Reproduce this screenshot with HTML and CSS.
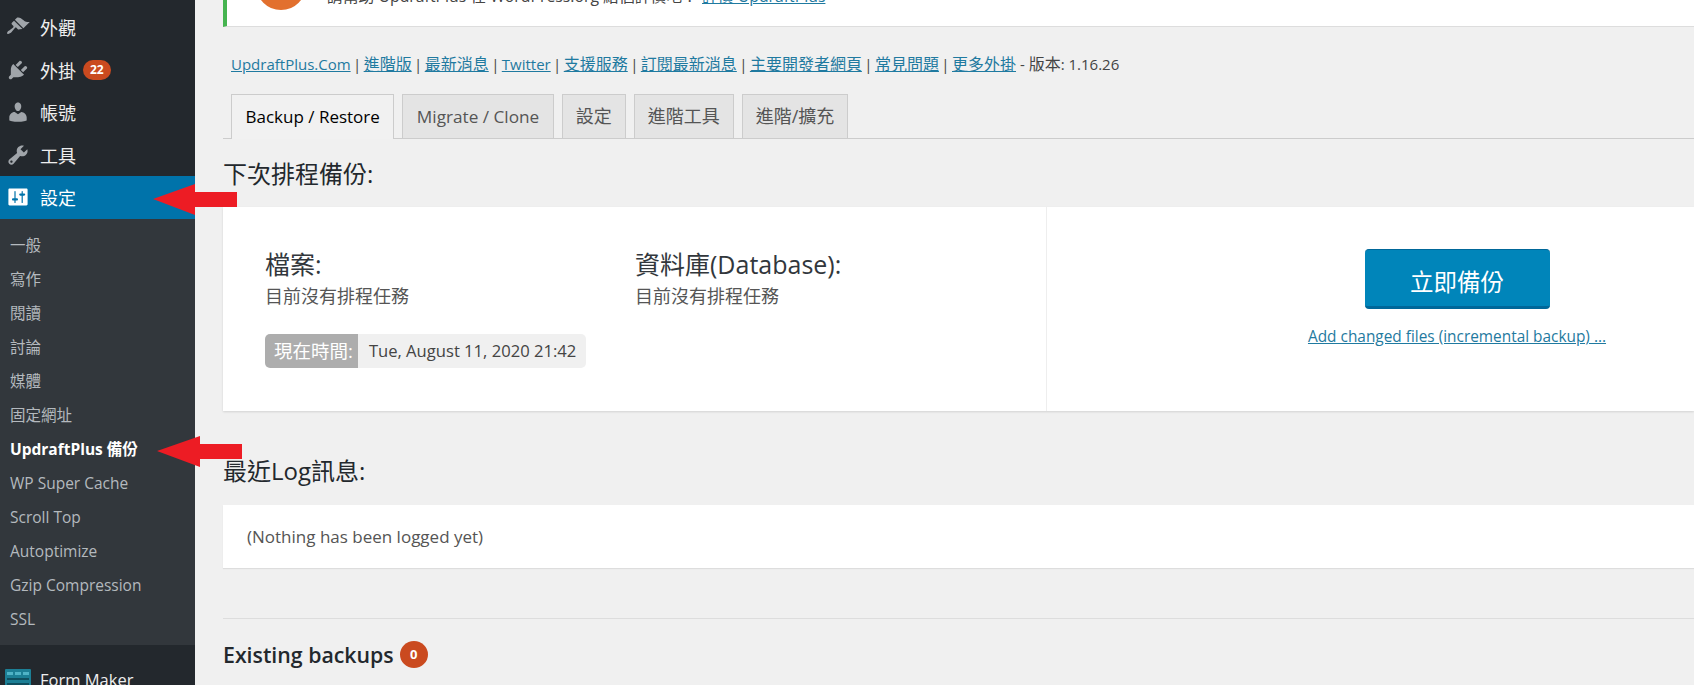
FILE: index.html
```html
<!DOCTYPE html>
<html lang="zh-Hant">
<head>
  <meta charset="UTF-8" />
  <title>UpdraftPlus 備份</title>
  <link rel="stylesheet" href="styles.css">
</head>
<body>
  <div class="page">
    <!-- Admin menu -->
    <nav class="sidebar">
      <a class="menu-item">
        <svg class="menu-icon" viewBox="0 0 20 20"><path d="M14.48 11.06L7.41 3.99l1.5-1.5c.5-.56 2.3-.47 3.51.32 1.21.8 1.43 1.28 2.91 2.1 1.18.64 2.45 1.26 4.45.85zm-.71.71L6.7 4.7 4.93 6.47c-.39.39-.39 1.02 0 1.41l1.06 1.06c.39.39.39 1.03 0 1.42-.6.6-1.43 1.11-2.21 1.69-.35.26-.7.53-1.01.84C1.43 13.23.4 14.98 1.1 15.67c.71.71 2.45-.32 3.79-1.67.31-.31.58-.66.84-1.01.58-.78 1.09-1.61 1.69-2.21.39-.39 1.02-.39 1.41 0l1.06 1.06c.39.39 1.02.39 1.41 0z"/></svg>
        <span>外觀</span>
      </a>
      <a class="menu-item">
        <svg class="menu-icon" viewBox="0 0 20 20"><path d="M13.11 4.36L9.87 7.6 8 5.73l3.24-3.24c.35-.34 1.05-.2 1.56.32.52.51.66 1.21.31 1.55zm-8 1.77l.91-1.12 9.01 9.01-1.19.84c-.71.71-2.63 1.16-3.82 1.16H6.14L4.9 17.26c-.59.59-1.54.59-2.12 0-.59-.58-.59-1.53 0-2.12l1.24-1.24v-3.88c0-1.13.4-3.19 1.09-3.89zm7.26 3.97l3.24-3.24c.34-.35 1.04-.21 1.55.31.52.51.66 1.21.31 1.55l-3.24 3.25z"/></svg>
        <span>外掛</span>
        <span class="count">22</span>
      </a>
      <a class="menu-item">
        <svg class="menu-icon" viewBox="0 0 20 20"><path d="M10 9.25c-2.27 0-2.73-3.44-2.73-3.44C7 4.02 7.82 2 9.97 2c2.16 0 2.98 2.02 2.71 3.81 0 0-.41 3.44-2.68 3.44zm0 2.57L12.72 10c2.39 0 4.52 2.33 4.52 4.53v2.49s-3.65 1.13-7.24 1.13c-3.65 0-7.24-1.13-7.24-1.13v-2.49c0-2.25 1.94-4.48 4.47-4.48z"/></svg>
        <span>帳號</span>
      </a>
      <a class="menu-item">
        <svg class="menu-icon" viewBox="0 0 20 20"><path d="M16.68 9.77c-1.34 1.34-3.3 1.67-4.95.99l-5.41 6.52c-.99.99-2.59.99-3.58 0s-.99-2.59 0-3.57l6.52-5.42c-.68-1.65-.35-3.61.99-4.95 1.28-1.28 3.12-1.62 4.72-1.06l-2.89 2.89 2.82 2.82 2.86-2.87c.53 1.58.18 3.39-1.08 4.65zM3.81 16.21c.4.39 1.04.39 1.43 0 .4-.4.4-1.04 0-1.43-.39-.4-1.03-.4-1.43 0-.39.39-.39 1.03 0 1.43z"/></svg>
        <span>工具</span>
      </a>
      <a class="menu-item current">
        <svg class="menu-icon" viewBox="0 0 20 20"><path d="M18 16V4c0-.55-.45-1-1-1H3c-.55 0-1 .45-1 1v12c0 .55.45 1 1 1h14c.55 0 1-.45 1-1zM8 11h1c.55 0 1 .45 1 1s-.45 1-1 1H8v1.5c0 .28-.22.5-.5.5s-.5-.22-.5-.5V13H6c-.55 0-1-.45-1-1s.45-1 1-1h1V5.5c0-.28.22-.5.5-.5s.5.22.5.5V11zm5-2h-1c-.55 0-1-.45-1-1s.45-1 1-1h1V5.5c0-.28.22-.5.5-.5s.5.22.5.5V7h1c.55 0 1 .45 1 1s-.45 1-1 1h-1v5.5c0 .28-.22.5-.5.5s-.5-.22-.5-.5V9z"/></svg>
        <span>設定</span>
      </a>
      <ul class="submenu">
        <li>一般</li>
        <li>寫作</li>
        <li>閱讀</li>
        <li>討論</li>
        <li>媒體</li>
        <li>固定網址</li>
        <li class="active">UpdraftPlus 備份</li>
        <li>WP Super Cache</li>
        <li>Scroll Top</li>
        <li>Autoptimize</li>
        <li>Gzip Compression</li>
        <li>SSL</li>
      </ul>
      <a class="menu-item form-maker">
        <svg class="fm-icon" viewBox="0 0 26 22"><rect width="26" height="22" rx="1" fill="#1c7f95"/><rect x="2" y="3" width="6" height="3" fill="#4fb3c6"/><rect x="10" y="3" width="6" height="3" fill="#4fb3c6"/><rect x="18" y="3" width="6" height="3" fill="#4fb3c6"/><rect x="2" y="9" width="22" height="2" fill="#0f4f5f"/><rect x="2" y="14" width="22" height="2" fill="#0f4f5f"/></svg>
        <span>Form Maker</span>
      </a>
    </nav>

    <main class="content">
      <div class="notice">
        <div class="notice-logo"></div>
        <p>請幫助 UpdraftPlus 在 WordPress.org 給個評價吧？ <a href="#">評價 UpdraftPlus</a></p>
      </div>

      <p class="links">
        <a href="#">UpdraftPlus.Com</a> | <a class="zh" href="#">進階版</a> | <a class="zh" href="#">最新消息</a> | <a href="#">Twitter</a> | <a class="zh" href="#">支援服務</a> | <a class="zh" href="#">訂閱最新消息</a> | <a class="zh" href="#">主要開發者網頁</a> | <a class="zh" href="#">常見問題</a> | <a class="zh" href="#">更多外掛</a><span class="version"> - <span class="zh">版本</span>: 1.16.26</span>
      </p>

      <div class="tabs">
        <a class="tab active">Backup / Restore</a>
        <a class="tab">Migrate / Clone</a>
        <a class="tab zh">設定</a>
        <a class="tab zh">進階工具</a>
        <a class="tab zh">進階/擴充</a>
      </div>

      <h2 class="section-title">下次排程備份:</h2>
      <div class="schedule-card">
        <div class="schedule-info">
          <div class="schedule-cols">
            <div class="schedule-col">
              <h3>檔案:</h3>
              <p>目前沒有排程任務</p>
            </div>
            <div class="schedule-col">
              <h3>資料庫(Database):</h3>
              <p>目前沒有排程任務</p>
            </div>
          </div>
          <div class="time-badge">
            <span class="time-label">現在時間:</span>
            <span class="time-value">Tue, August 11, 2020 21:42</span>
          </div>
        </div>
        <div class="schedule-action">
          <button class="backup-btn">立即備份</button>
          <a class="incremental" href="#">Add changed files (incremental backup) ...</a>
        </div>
      </div>

      <h2 class="section-title log-title">最近Log訊息:</h2>
      <div class="log-box">(Nothing has been logged yet)</div>

      <hr class="divider">

      <h2 class="existing">Existing backups <span class="existing-count">0</span></h2>
    </main>

    <!-- Annotation arrows over the screenshot -->
    <svg class="arrow arrow-settings" viewBox="0 0 84 32"><polygon points="0,15 42,0 42,8 84,8 84,23 42,23 42,31"/></svg>
    <svg class="arrow arrow-updraft" viewBox="0 0 85 32"><polygon points="0,15 43,0 43,8 85,8 85,23 43,23 43,31"/></svg>
  </div>
</body>
</html>
```

FILE: styles.css
```css
* {
  box-sizing: border-box;
}
html, body {
  margin: 0;
  height: 100%;
  overflow: hidden;
}
body {
  font-family: "Open Sans", "Noto Sans CJK TC", sans-serif;
  background: #f0f0f0;
  color: #444;
}
.page {
  position: relative;
  display: flex;
  height: 685px;
  overflow: hidden;
}
a {
  color: #1f7aa0;
}

/* sidebar */
.sidebar {
  flex: 0 0 195px;
  padding-top: 6px;
  background: #23282d;
  color: #eee;
  overflow: hidden;
}
.menu-item {
  display: flex;
  align-items: center;
  height: 42.5px;
  padding-left: 6px;
  font-size: 18px;
  color: #eee;
}
.menu-icon {
  width: 24px;
  height: 24px;
  margin-right: 10px;
  fill: #a0a5aa;
  flex: none;
}
.count {
  margin-left: 7px;
  padding: 0 7px;
  height: 20px;
  line-height: 20px;
  border-radius: 10px;
  background: #ca4a1f;
  color: #fff;
  font-size: 12px;
  font-weight: 700;
}
.menu-item.current {
  background: #0073aa;
  color: #fff;
}
.menu-item.current .menu-icon {
  fill: #fff;
}
.submenu {
  list-style: none;
  margin: 0;
  padding: 9px 0 9px;
  background: #32373c;
  color: #b4b9be;
  font-size: 15.5px;
}
.submenu li {
  height: 34px;
  line-height: 34px;
  padding-left: 10px;
  white-space: nowrap;
}
.submenu li.active {
  color: #fff;
  font-weight: 700;
}
.form-maker {
  margin-top: 14px;
  padding-left: 5px;
  font-size: 16.5px;
}
.fm-icon {
  width: 26px;
  height: 22px;
  margin-right: 9px;
  flex: none;
}

/* main column */
.content {
  flex: 1;
  min-width: 0;
  padding-left: 28px;
  overflow: hidden;
}
.notice {
  display: flex;
  align-items: flex-end;
  height: 27px;
  background: #fff;
  border-left: 4px solid #46b450;
  border-bottom: 1px solid #ddd;
  padding: 0 0 20px 29px;
  clip-path: inset(0);
}
.notice-logo {
  flex: none;
  width: 50px;
  height: 50px;
  margin-bottom: -4px;
  margin-right: 21px;
  border: 11px solid #e2702e;
  border-radius: 50%;
}
.notice p {
  margin: 0;
  font-size: 15.8px;
  line-height: 20px;
  white-space: nowrap;
}
.links {
  margin: 26px 0 0 8px;
  font-size: 15px;
  line-height: 22px;
  word-spacing: -1.5px;
  white-space: nowrap;
}
.links .zh {
  font-size: 16px;
}
.version {
  word-spacing: 0;
}
.tabs {
  display: flex;
  gap: 8px;
  height: 45px;
  margin-top: 19px;
  padding-left: 8px;
  border-bottom: 1px solid #ccc;
}
.tab {
  height: 44px;
  padding: 0 13.5px;
  line-height: 43px;
  font-size: 17.2px;
  color: #555;
  background: #e4e4e4;
  border: 1px solid #ccc;
  border-bottom: 0;
}
.tab.zh {
  padding: 0 13px;
  font-size: 18px;
}
.tab.active {
  height: 45px;
  font-size: 17px;
  color: #000;
  background: #f1f1f1;
}
.section-title {
  margin: 19px 0 0;
  height: 32px;
  line-height: 32px;
  font-size: 24px;
  font-weight: 400;
  color: #23282d;
}
.schedule-card {
  display: flex;
  height: 204px;
  margin-top: 17px;
  background: #fff;
  box-shadow: 0 1px 2px rgba(0, 0, 0, 0.12);
}
.schedule-info {
  flex: 0 0 824px;
  padding: 40px 0 0 42px;
  border-right: 1px solid #eee;
}
.schedule-cols {
  display: flex;
}
.schedule-col {
  flex: 0 0 370px;
}
.schedule-col h3 {
  margin: 0;
  height: 34px;
  line-height: 34px;
  font-size: 25px;
  font-weight: 400;
  color: #32373c;
}
.schedule-col p {
  margin: 0;
  height: 26px;
  padding-top: 2px;
  line-height: 27px;
  font-size: 18px;
  color: #555;
}
.time-badge {
  display: inline-flex;
  height: 34px;
  margin-top: 27px;
  line-height: 34px;
  border-radius: 5px;
  overflow: hidden;
}
.time-label {
  padding: 0 5px 0 9px;
  background: #adadad;
  color: #fff;
  font-size: 18.5px;
}
.time-value {
  padding: 0 10px 0 11px;
  background: #f0f0f0;
  color: #444;
  font-size: 16.6px;
}
.schedule-action {
  flex: 0 0 820px;
  display: flex;
  flex-direction: column;
  align-items: center;
  padding-top: 42px;
}
.backup-btn {
  width: 185px;
  height: 60px;
  padding-top: 6px;
  border: 0;
  border-bottom: 3px solid #006799;
  border-top: 1px solid #006799;
  border-radius: 4px;
  background: #0085ba;
  color: #fff;
  font-family: inherit;
  font-size: 23.5px;
}
.incremental {
  margin-top: 17px;
  font-size: 15.4px;
  line-height: 22px;
}
.log-title {
  margin-top: 44px;
}
.log-box {
  height: 63px;
  margin-top: 18px;
  padding: 0 24px;
  line-height: 64px;
  font-size: 17px;
  color: #555;
  background: #fff;
  box-shadow: 0 1px 1px rgba(0, 0, 0, 0.08);
}
.divider {
  height: 1px;
  margin: 50px 0 0;
  border: 0;
  background: #ddd;
}
.existing {
  display: flex;
  align-items: center;
  gap: 6px;
  margin: 20px 0 0;
  height: 30px;
  font-size: 21.3px;
  font-weight: 600;
  color: #23282d;
}
.existing-count {
  width: 28px;
  height: 27px;
  line-height: 27px;
  text-align: center;
  border-radius: 50%;
  background: #ca4a1f;
  color: #fff;
  font-size: 13px;
  font-weight: 700;
}

/* arrows */
.arrow {
  position: absolute;
  fill: #ed1c24;
}
.arrow-settings {
  left: 153px;
  top: 184px;
  width: 84px;
  height: 32px;
}
.arrow-updraft {
  left: 157px;
  top: 436px;
  width: 85px;
  height: 32px;
}
```
